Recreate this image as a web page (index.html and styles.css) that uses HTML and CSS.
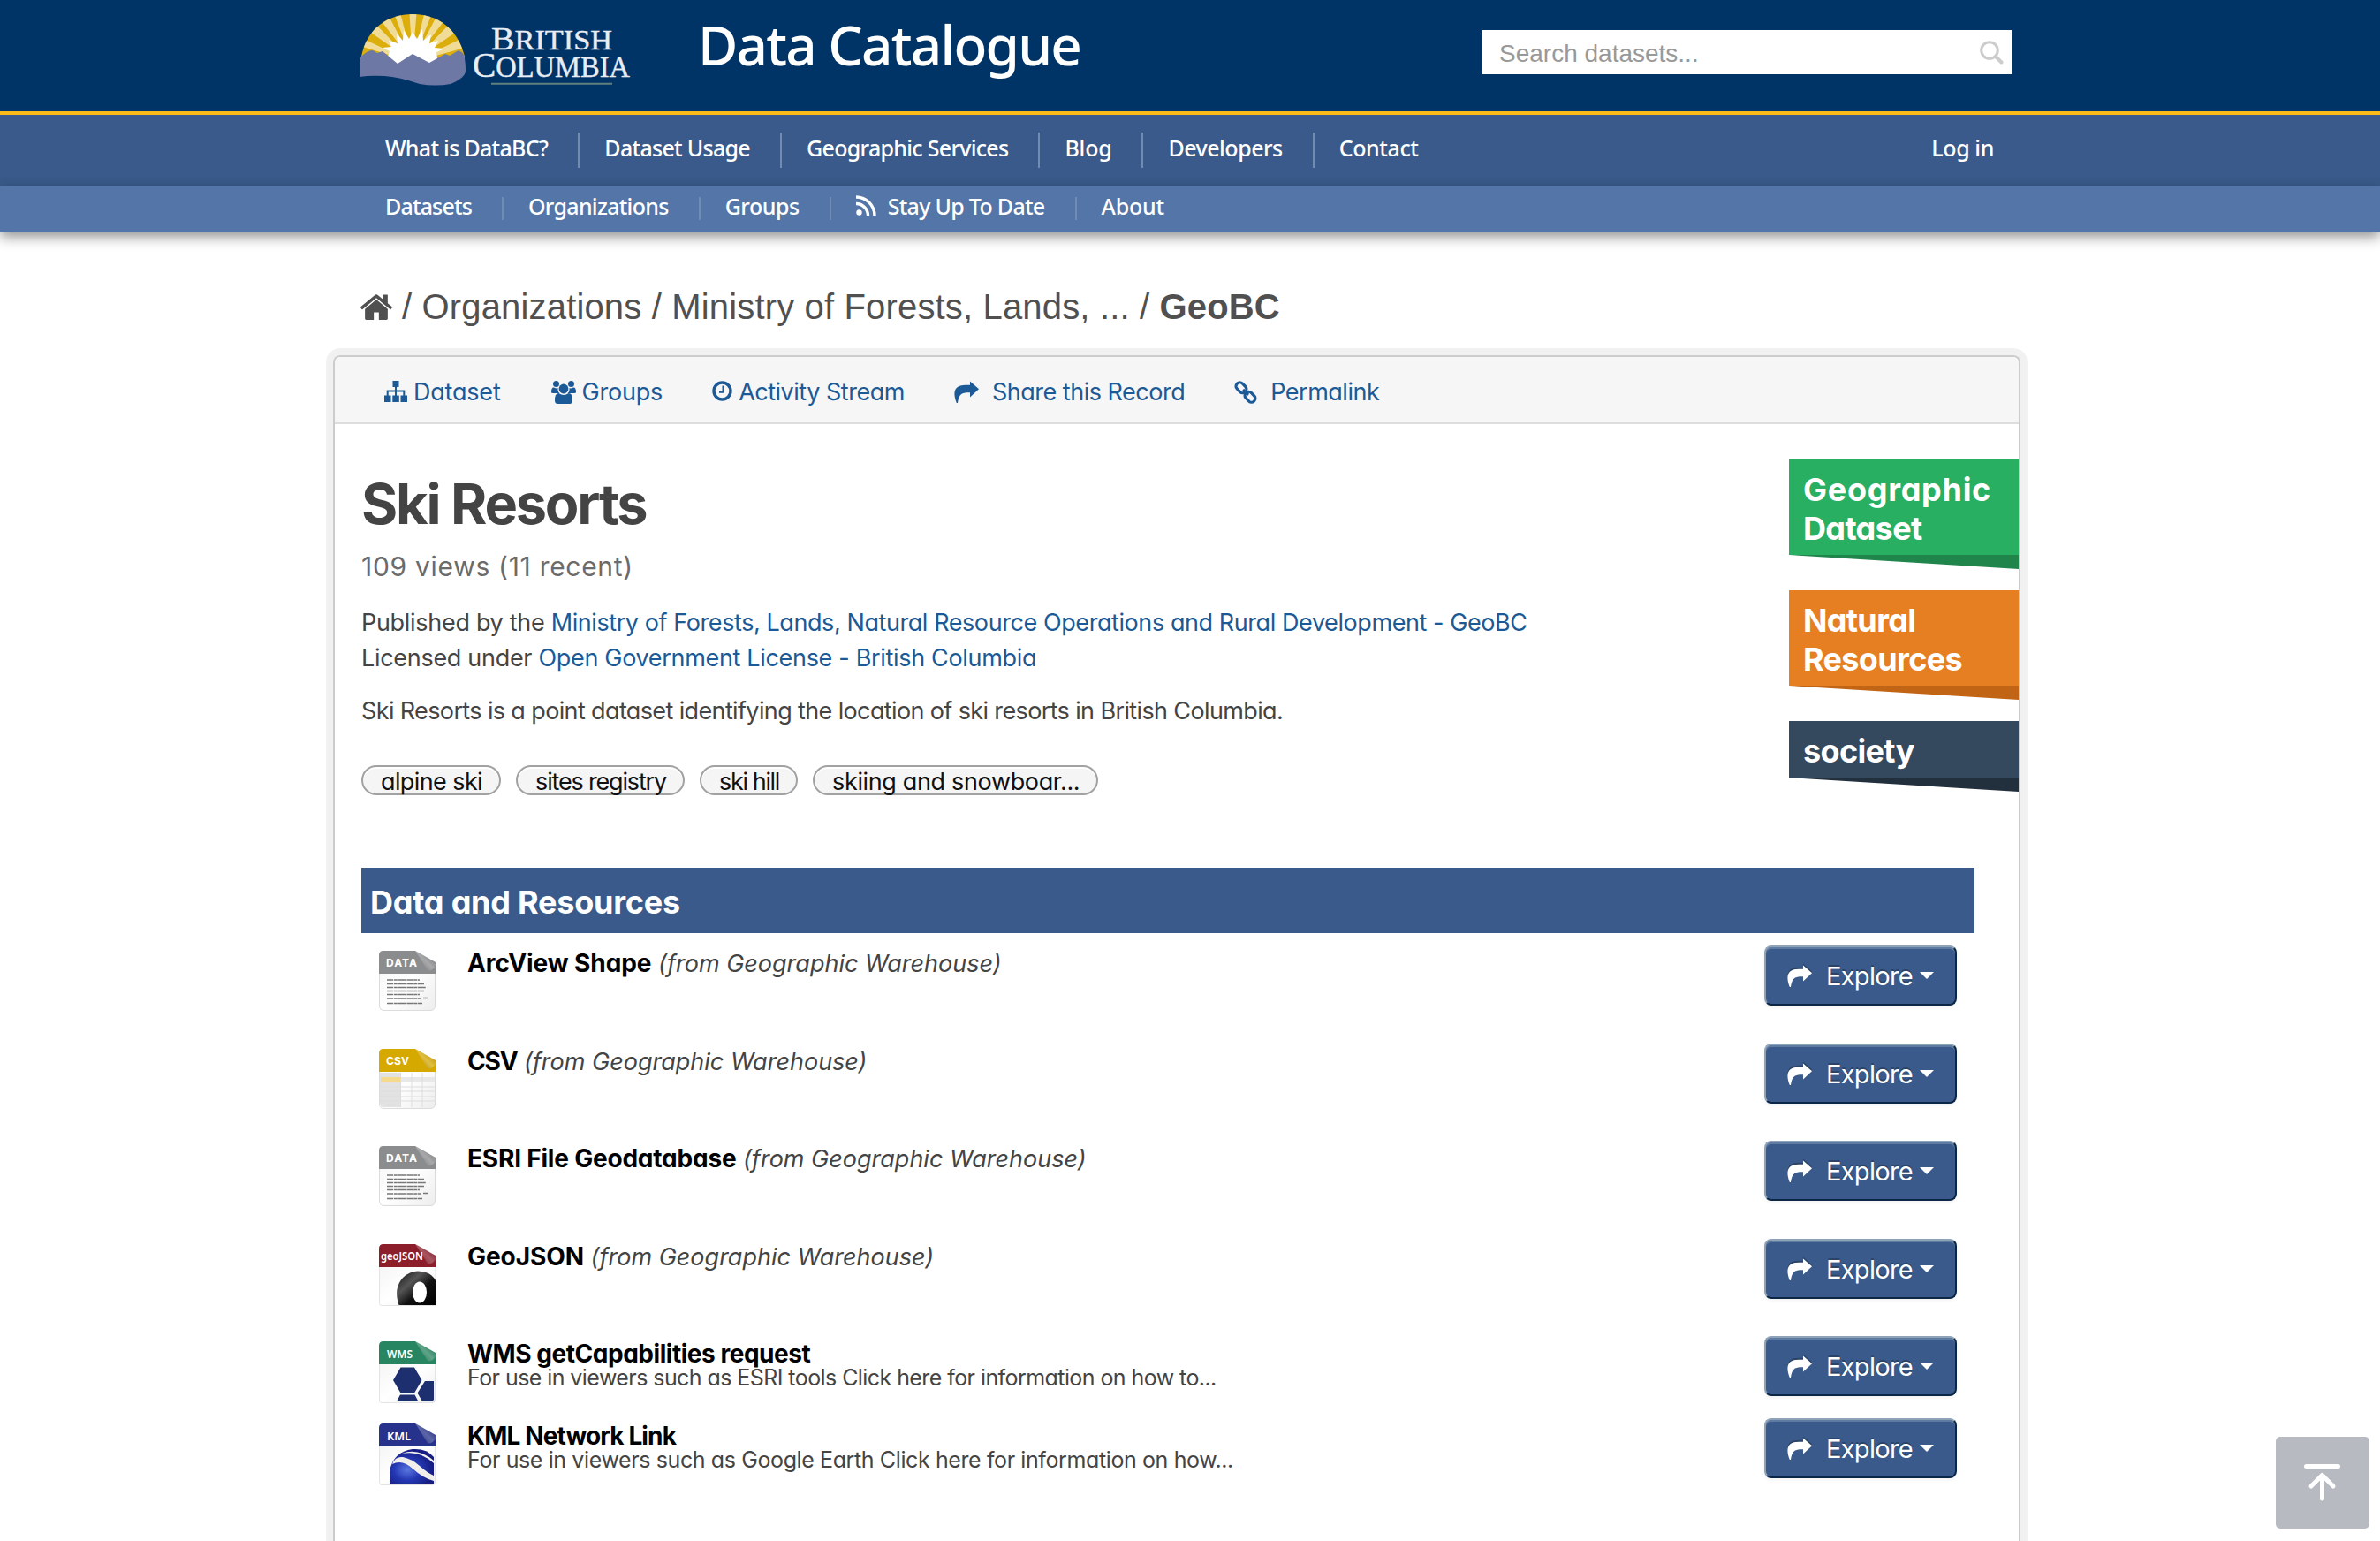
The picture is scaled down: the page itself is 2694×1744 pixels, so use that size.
FILE: index.html
```html
<!DOCTYPE html>
<html lang="en">
<head>
<meta charset="utf-8">
<title>Ski Resorts - Data Catalogue</title>
<link rel="stylesheet" href="styles.css">
</head>
<body>
<svg class="defs" width="0" height="0">
  <defs>
    <symbol id="share" viewBox="0 0 28 25"><path d="M18 0.5 28 9.3 18 18.5V13.2C9.500 13 5.500 14 4 25H2.800C-2 13 0 4.800 13 4.800H18Z"/></symbol>
    <linearGradient id="fold" x1="0" y1="1" x2="1" y2="0"><stop offset="0" stop-color="#000" stop-opacity=".35"/><stop offset=".5" stop-color="#fff" stop-opacity=".25"/><stop offset="1" stop-color="#000" stop-opacity=".15"/></linearGradient>
    <linearGradient id="paper" x1="0" y1="0" x2="1" y2="1"><stop offset="0" stop-color="#f4f4f4"/><stop offset=".5" stop-color="#fff"/><stop offset="1" stop-color="#ededed"/></linearGradient>
    <radialGradient id="globe" cx=".4" cy=".6" r=".6"><stop offset="0" stop-color="#5a78e0"/><stop offset=".5" stop-color="#2438b4"/><stop offset="1" stop-color="#161c80"/></radialGradient>
    <linearGradient id="ring" x1="0" y1="0" x2="1" y2="1"><stop offset="0" stop-color="#111"/><stop offset=".35" stop-color="#555"/><stop offset=".6" stop-color="#111"/><stop offset="1" stop-color="#000"/></linearGradient>
    <symbol id="sheet" viewBox="0 0 64 70"><path d="M.5 8V62Q.5 67.500 6 67.500H58Q63.500 67.500 63.500 62V20L42 1H6Z" fill="url(#paper)" stroke="#dcdcdc"/></symbol>
    <symbol id="tab" viewBox="0 0 64 70"><path d="M0 26V5Q0 0 5 0H41L64 13V26Z"/><path d="M41 0 64 13V17Q60 24 55 22Z" fill="url(#fold)"/></symbol>
    <symbol id="data" viewBox="0 0 64 70"><use href="#sheet"/><use href="#tab" fill="#8b8c8e"/><text x="8" y="18" class="tab-text" textLength="35">DATA</text><g stroke="#777" stroke-width="1.500" stroke-dasharray="7 .8 4 .6 9 1"><path d="M9 33H46M9 37.500H51M9 41.500H53M9 45.500H51M9 49.500H46M9 54H48M50 53.500H56M9 59.500H49"/></g></symbol>
  </defs>
</svg>

<header class="banner">
  <svg class="logo" viewBox="0 0 312 100" width="312" height="100">
    <defs><clipPath id="sun"><path d="M2 64C8 32 32 16 60 16S111 32 119 64V75H2Z"/></clipPath></defs>
    <g clip-path="url(#sun)">
      <rect width="122" height="80" fill="#dcae0c"/>
      <path fill="#f0dc96" d="M60 70 0 52 0 42ZM60 70 6 32 14 23ZM60 70 21 19 30 12ZM60 70 37 10 45 10ZM60 70 56 8 65 8ZM60 70 75 8 84 10ZM60 70 90 13 100 18ZM60 70 105 24 114 33ZM60 70 117 43 123 53Z"/>
      <path fill="#fff" d="M60 72 26 54 36 53 33 46 43 49 42 38 49 46 50 34 56 44 60 36 65 44 71 33 72 46 81 39 79 49 89 46 85 54 96 55Z"/>
      <ellipse cx="60" cy="66" rx="28" ry="20" fill="#fff"/>
    </g>
    <path fill="#6d78a4" d="M0 66Q8 57 15 57L20 60 26 58 43 72 60 61 79 71 97 61 102 63 112 57 117 60Q120 66 120 80 120 88 103 95 86 98 68 95 45 87 28 86 12 85 0 87Z"/>
    <g class="logo-text"><text x="149" y="56" textLength="137" lengthAdjust="spacingAndGlyphs"><tspan font-size="36">B</tspan><tspan font-size="31">RITISH</tspan></text>
    <text x="128" y="87" textLength="178" lengthAdjust="spacingAndGlyphs"><tspan font-size="40">C</tspan><tspan font-size="33">OLUMBIA</tspan></text></g>
    <path d="M149 94.800H286" stroke="#60807f" stroke-width="2"/>
  </svg>
  <h1 class="site-title">Data Catalogue</h1>
  <div class="search"><span>Search datasets...</span>
    <svg viewBox="0 0 27 27" width="27" height="27" fill="none" stroke="#ccc"><circle cx="11" cy="11" r="9.300" stroke-width="3"/><path d="m18 18 6.500 6.500" stroke-width="4" stroke-linecap="round"/></svg>
  </div>
</header>

<nav class="nav main-nav">
  <a>What is DataBC?</a><a>Dataset Usage</a><a>Geographic Services</a><a>Blog</a><a>Developers</a><a>Contact</a><a class="login">Log in</a>
</nav>
<nav class="nav sub-nav">
  <a>Datasets</a><a>Organizations</a><a>Groups</a><a><svg viewBox="0 0 23 23" width="23" height="23"><circle cx="3.500" cy="19.500" r="3.200" fill="#fff"/><path d="M0 9.500A13.500 13.500 0 0 1 13.500 23M0 2A21 21 0 0 1 21 23" fill="none" stroke="#fff" stroke-width="3.400"/></svg>Stay Up To Date</a><a>About</a>
</nav>

<main>
  <div class="crumbs">
    <svg viewBox="90 240 1612 1296" width="36" height="29"><path d="M1472 992v480q0 26-19 45t-45 19h-384v-384h-256v384h-384q-26 0-45-19t-19-45v-480q0-1 .5-3t.5-3l575-474 575 474q1 2 1 6zm223-69l-62 74q-8 9-21 11h-3q-13 0-21-7l-692-577-692 577q-12 8-24 7-13-2-21-11l-62-74q-8-10-7-23.500t11-21.500l719-599q32-26 76-26t76 26l244 204v-195q0-14 9-23t23-9h192q14 0 23 9t9 23v408l219 182q10 8 11 21.500t-7 23.500z"/></svg>
    <span>/ Organizations / Ministry of Forests, Lands, ... / <b>GeoBC</b></span>
  </div>

  <section class="panel">
    <div class="toolbar">
      <a><svg viewBox="0 0 26 24" width="26" height="24"><path d="M9.500 0h7v7h-7zM0 16.500h7.500V24H0zM9.300 16.500h7.500V24H9.300zM18.500 16.500H26V24h-7.500z"/><path d="M13 6v11M3.700 17v-5.500h18.600V17" fill="none" stroke="#1b5a96" stroke-width="2"/></svg>Dataset</a>
      <a><svg viewBox="0 0 28 26" width="28" height="26"><circle cx="5.500" cy="3.500" r="3.500"/><circle cx="22.500" cy="3.500" r="3.500"/><circle cx="14" cy="9" r="5.400"/><path d="M0 13Q0 7 3 7.500Q6 9 7.500 8Q7 12 9.500 14H2Q0 14 0 13ZM28 13Q28 7 25 7.500Q22 9 20.500 8Q21 12 18.500 14H26Q28 14 28 13ZM4 23Q3.500 14 8.500 14Q14 18 19.500 14Q24.500 14 24 23 23.500 26 21 26H7Q4.500 26 4 23Z"/></svg>Groups</a>
      <a><svg viewBox="0 0 23 23" width="23" height="23" fill="none" stroke="#1b5a96"><circle cx="11.500" cy="11.500" r="9.500" stroke-width="3.400"/><path d="M12.500 5.500v7.300H8" stroke-width="2"/></svg>Activity Stream</a>
      <a class="wide"><svg width="28" height="25"><use href="#share"/></svg>Share this Record</a>
      <a class="wide"><svg viewBox="0 0 26 26" width="26" height="26" fill="none" stroke="#1b5a96" stroke-width="3.200"><rect x="1.500" y="3.500" width="13" height="8.500" rx="4" transform="rotate(45 8 7.700)"/><rect x="11.500" y="14" width="13" height="8.500" rx="4" transform="rotate(45 18 18.200)"/><path d="m10 10 6 6"/></svg>Permalink</a>
    </div>

    <div class="record">
      <div class="summary">
        <h2>Ski Resorts</h2>
        <p class="views">109 views (11 recent)</p>
        <p class="meta">Published by the <a>Ministry of Forests, Lands, Natural Resource Operations and Rural Development - GeoBC</a></p>
        <p class="meta">Licensed under <a>Open Government License - British Columbia</a></p>
        <p class="about">Ski Resorts is a point dataset identifying the location of ski resorts in British Columbia.</p>
        <div class="tags"><a>alpine ski</a><a>sites registry</a><a>ski hill</a><a>skiing and snowboar...</a></div>
      </div>
      <aside class="ribbons">
        <div class="ribbon green"><div><span class="loose">Geographic</span><br>Dataset</div></div>
        <div class="ribbon orange"><div>Natural<br>Resources</div></div>
        <div class="ribbon slate"><div>society</div></div>
      </aside>
    </div>

    <h3 class="bar">Data and Resources</h3>
    <ul class="resources">
      <li><svg class="file" viewBox="0 0 64 70"><use href="#data"/></svg>
        <div class="info"><b>ArcView Shape</b> <i>(from Geographic Warehouse)</i></div>
        <a class="btn"><svg width="28" height="25"><use href="#share"/></svg>Explore</a></li>
      <li><svg class="file" viewBox="0 0 64 70"><use href="#sheet"/><path d="M1 27H24V66H6Q1 66 1 62Z" fill="#e2e2e2"/><path d="M24 32H63V37H24Z" fill="#e8e8e8"/><path d="M2 32H24V37.500H2Z" fill="#f5d98c"/><path d="M1 43H63M1 48H63M1 54H63M1 59H63M24.500 27V66M37 27V66M49 27V66" stroke="#ddd"/><use href="#tab" fill="#d6a900"/><text x="8" y="18" class="tab-text" textLength="26">CSV</text></svg>
        <div class="info"><b>CSV</b> <i>(from Geographic Warehouse)</i></div>
        <a class="btn"><svg width="28" height="25"><use href="#share"/></svg>Explore</a></li>
      <li><svg class="file" viewBox="0 0 64 70"><use href="#data"/></svg>
        <div class="info"><b>ESRI File Geodatabase</b> <i>(from Geographic Warehouse)</i></div>
        <a class="btn"><svg width="28" height="25"><use href="#share"/></svg>Explore</a></li>
      <li><svg class="file" viewBox="0 0 64 70"><path d="M.5 20H64V69.500H3Q.5 69.500 .5 67Z" fill="url(#paper)" stroke="#e4e4e4"/><use href="#tab" fill="#8c1d2b"/><text x="2" y="18" class="tab-text regular" textLength="48" lengthAdjust="spacingAndGlyphs">geoJSON</text><path d="M22.500 69Q16 50 27 38 38 27 53 32 60 34 64 41V69Z" fill="url(#ring)"/><ellipse cx="46" cy="54.500" rx="8" ry="12" fill="#fff"/></svg>
        <div class="info"><b>GeoJSON</b> <i>(from Geographic Warehouse)</i></div>
        <a class="btn"><svg width="28" height="25"><use href="#share"/></svg>Explore</a></li>
      <li><svg class="file" viewBox="0 0 64 70"><path d="M.5 20H63.500V67Q63.500 69.500 60 69.500H3Q.5 69.500 .5 67Z" fill="url(#paper)" stroke="#e4e4e4"/><use href="#tab" fill="#278661"/><text x="9" y="19" class="tab-text regular" textLength="29" lengthAdjust="spacingAndGlyphs">WMS</text><path fill="#1e2f70" d="M16 44 24.500 29.500H40L48.500 44 40 58.500H24.500ZM52 45H62V66L60 68H49L43.500 58.500ZM24 60.500H40.500L44.500 68H20Z"/></svg>
        <div class="info"><b>WMS getCapabilities request</b><p>For use in viewers such as ESRI tools Click here for information on how to...</p></div>
        <a class="btn"><svg width="28" height="25"><use href="#share"/></svg>Explore</a></li>
      <li><svg class="file" viewBox="0 0 64 70"><path d="M.5 20H63.500V67Q63.500 69.500 60 69.500H3Q.5 69.500 .5 67Z" fill="url(#paper)" stroke="#e4e4e4"/><use href="#tab" fill="#26328c"/><text x="9" y="19" class="tab-text regular" textLength="27" lengthAdjust="spacingAndGlyphs">KML</text><path d="M12 68V54Q16 32 38 29 54 28 62 38V68Z" fill="url(#globe)"/><path d="M15 46Q18 37 27 38 37 40 46 48 55 56 62 59V65Q50 62 38 51 26 40 15 46ZM26 34Q44 27 62 42V45Q46 30 26 34Z" fill="#f0efec"/></svg>
        <div class="info"><b>KML Network Link</b><p>For use in viewers such as Google Earth Click here for information on how...</p></div>
        <a class="btn"><svg width="28" height="25"><use href="#share"/></svg>Explore</a></li>
    </ul>
  </section>
</main>

<a class="to-top"><svg viewBox="0 0 106 104" width="106" height="104" fill="none" stroke="#fff" stroke-width="5" stroke-linecap="round" stroke-linejoin="round"><path d="M34.500 33.500H70.500M52.500 70V44M40 56 52.500 43.500 65 56"/></svg></a>
</body>
</html>
```
FILE: styles.css
```css
* { box-sizing: border-box; }
body {
  margin: 0;
  height: 1744px;
  overflow: hidden;
  position: relative;
  background: #fff;
  color: #444;
  font-family: Inter, "Open Sans", sans-serif;
  font-feature-settings: "cv11";
  font-size: 27px;
}
h1, h2, h3, p, ul { margin: 0; padding: 0; }
svg { display: block; flex: none; }
a { text-decoration: none; }
.defs { position: absolute; }

.banner {
  display: flex;
  height: 130px;
  padding: 0 417px 0 407px;
  background: #003366;
  border-bottom: 4px solid #fcba19;
}
.logo-text { font-family: "Liberation Serif", serif; fill: #e9edf3; stroke: #e9edf3; stroke-width: .4; }
.site-title {
  margin-left: 71px;
  color: #fff;
  font: 500 62px/101px "Noto Sans", sans-serif;
  letter-spacing: -1.75px;
}
.search {
  display: flex;
  justify-content: space-between;
  width: 600px;
  height: 50px;
  margin: 34px 0 0 auto;
  padding: 0 9px 0 20px;
  background: #fff;
  color: #999;
  font: 28px/53px "Liberation Sans", sans-serif;
}
.search svg { margin-top: 12px; }

.nav {
  display: flex;
  align-items: flex-start;
  padding: 20px 437px 0 408px;
  color: #fff;
  font: 500 25px/35px "Noto Sans", sans-serif;
  letter-spacing: -.7px;
}
.nav a { display: flex; padding: 0 34px 0 28px; }
.nav a + a { border-left: 2px solid #728bb0; }
.main-nav { height: 80px; background: #395a8a; }
.main-nav a { height: 40px; }
.main-nav a:nth-child(4) { letter-spacing: -.22px; }
.main-nav a:nth-child(5) { letter-spacing: -.5px; }
.main-nav a:nth-child(n + 6) { letter-spacing: -.4px; }
.nav .login { margin-left: auto; padding: 0; border: 0; }
.sub-nav {
  position: relative;
  height: 52px;
  padding-top: 13px;
  background: #5475a7;
  box-shadow: 0 6px 14px rgba(0, 0, 0, .43);
}
.sub-nav a { height: 26px; line-height: 21px; }
.sub-nav a:nth-child(1) { letter-spacing: -.84px; }
.sub-nav a:nth-child(3) { letter-spacing: -.48px; }
.sub-nav a:nth-child(5) { letter-spacing: -.2px; }
.sub-nav svg { margin: -2px 13px 0 0; }

.crumbs {
  display: flex;
  align-items: center;
  height: 50px;
  margin: 60px 0 30px 408px;
  color: #505050;
  fill: #505050;
  font: 40px/50px "Liberation Sans", sans-serif;
  letter-spacing: .16px;
}
.crumbs svg { margin-right: 11px; }

.panel {
  width: 1910px;
  height: 1342px;
  margin-left: 377px;
  border: 2px solid #ccc;
  border-bottom: 0;
  border-radius: 8px 8px 0 0;
  box-shadow: 0 0 0 8px #f1f1f1;
}
.toolbar {
  display: flex;
  gap: 56px;
  height: 76px;
  padding-left: 56px;
  background: #f6f6f6;
  border-bottom: 2px solid #ddd;
  border-radius: 6px 6px 0 0;
  line-height: 80px;
  letter-spacing: -.49px;
}
.toolbar a { display: flex; gap: 7px; color: #1b5a96; fill: #1b5a96; }
.toolbar a:nth-child(-n + 2) { letter-spacing: -.2px; }
.toolbar a:first-child { margin-right: 1px; }
.toolbar .wide { gap: 15px; }
.toolbar svg { margin-top: 27px; }

.record { display: flex; justify-content: space-between; height: 502px; }
.summary { padding: 50px 0 0 30px; line-height: 40px; }
.summary h2 { color: #444; font-size: 63px; line-height: 81px; font-weight: 700; letter-spacing: -2.2px; }
.views { margin-top: 10px; color: #6b6b6b; font-size: 30px; letter-spacing: .7px; }
.meta { white-space: nowrap; letter-spacing: -.3px; }
.views + .meta { margin-top: 24px; }
.meta a { color: #1b5a96; letter-spacing: -.32px; }
.views + .meta a { letter-spacing: -.42px; }
.about { margin-top: 20px; letter-spacing: -.63px; }
.tags { display: flex; gap: 17px; margin-top: 41px; }
.tags a {
  height: 34px;
  padding: 0 19px 0 20px;
  border: 2px solid #a2a2a2;
  border-radius: 17px;
  background: #f5f5f5;
  box-shadow: inset 0 2px 0 #fff;
  color: #111;
  line-height: 33px;
  letter-spacing: -.6px;
}
.tags a:nth-child(2) { letter-spacing: -1.17px; }
.tags a:nth-child(3) { letter-spacing: -1.35px; }
.tags a:nth-child(4) { letter-spacing: -.35px; }

.ribbons { display: flex; flex-direction: column; gap: 24px; width: 260px; padding-top: 40px; }
.ribbon div {
  padding: 12px 0 8px 16px;
  color: #fff;
  font-size: 36px;
  font-weight: 700;
  line-height: 44px;
  letter-spacing: -.65px;
}
.ribbon .loose { letter-spacing: .72px; }
.ribbon::after { content: ""; display: block; height: 16px; clip-path: polygon(0 0, 100% 0, 100% 100%); }
.green div { background: #29af61; }
.green::after { background: #20854b; }
.orange div { background: #e67f22; }
.orange::after { background: #c16414; }
.slate div { background: #34495e; }
.slate::after { background: #222f3d; }

.bar {
  width: 1826px;
  height: 74px;
  margin-left: 30px;
  padding-left: 10px;
  background: #395a8a;
  color: #fff;
  font-size: 36px;
  line-height: 78px;
  letter-spacing: -.22px;
}
.resources { width: 1826px; margin-left: 30px; padding: 14px 20px 0; list-style: none; }
.resources li { display: flex; height: 110.500px; }
.resources li:nth-child(5) { height: 93px; }
.file { width: 64px; height: 70px; margin: 6px 36px 0 0; }
.tab-text { font: 700 12px Inter, sans-serif; fill: #fff; }
.tab-text.regular { font: 600 12px "Noto Sans", sans-serif; }
.info { padding-top: 3px; line-height: 34px; }
.info b { color: #000; font-size: 28px; letter-spacing: -.07px; }
.info p { font-size: 25px; line-height: 18px; letter-spacing: -.57px; }
li:nth-child(2) b { letter-spacing: -1.2px; }
li:nth-child(3) b { letter-spacing: -.2px; }
li:nth-child(5) b { letter-spacing: -.46px; }
li:nth-child(6) b { letter-spacing: -.87px; }
li:nth-child(6) p { letter-spacing: -.39px; }
.btn {
  display: flex;
  width: 218px;
  height: 68px;
  margin-left: auto;
  padding-left: 24px;
  border: 2px solid;
  border-color: #8fa3b8 #0b2745 #0b2745 #8fa3b8;
  border-radius: 8px;
  background: #395a8a;
  box-shadow: inset 0 2px 0 rgba(255, 255, 255, .2), 0 2px 4px rgba(0, 0, 0, .05);
  color: #fff;
  fill: #fff;
  font-size: 29px;
  line-height: 66px;
  letter-spacing: -.7px;
  text-shadow: 0 -2px 0 rgba(0, 0, 0, .25);
}
.btn svg { margin: 20px 16px 0 0; filter: drop-shadow(0 -2px 0 rgba(0, 0, 0, .25)); }
.btn::after { content: ""; height: 0; margin: 28px 0 0 8px; border: 8px solid transparent; border-top-color: #fff; border-bottom: 0; }

.to-top {
  position: absolute;
  left: 2576px;
  top: 1626px;
  width: 106px;
  height: 104px;
  border-radius: 5px;
  background: #b8bac2;
}
```
